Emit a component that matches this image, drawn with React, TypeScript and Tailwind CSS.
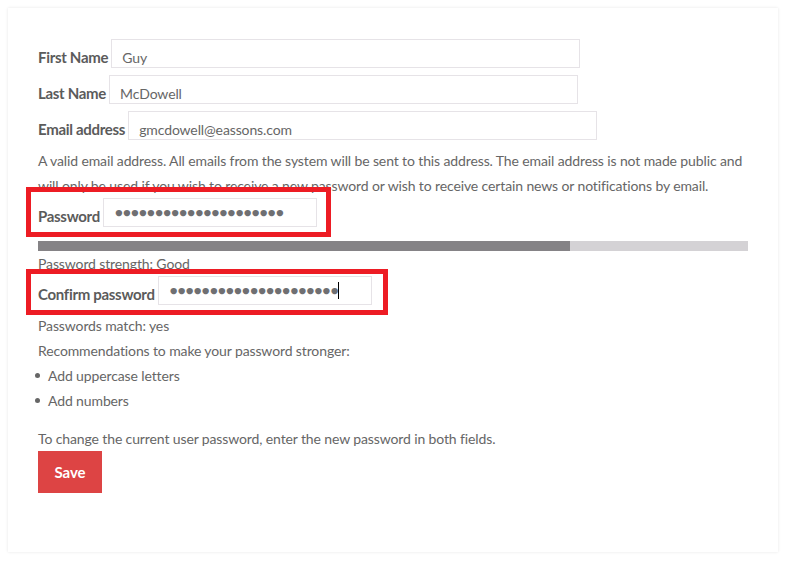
import React from "react"

const font = { fontFamily: "Lato, 'Open Sans', sans-serif" }

function TextRow({ label, value, width }: { label: string; value: string; width: string }) {
  return (
    <div className="flex items-baseline gap-[3px]">
      <label className="text-[15px] leading-[20px] font-bold text-[#5b5b5b] tracking-[-0.3px]">{label}</label>
      <div className={`${width} h-[29px] border border-[#e6e3e7] pt-[8px] pl-[10px] leading-[20px] text-[14px] text-[#666]`}>
        {value}
      </div>
    </div>
  )
}

function Dots({ cursor }: { cursor?: boolean }) {
  return (
    <div className="flex items-center pl-[11px] text-[#6f6f72]">
      <span className="text-[13px] leading-none tracking-[0.25px]">{"●".repeat(21)}</span>
      {cursor && <span className="ml-[-1px] w-px h-[17px] bg-black" />}
    </div>
  )
}

export default function App() {
  return (
    <div className="min-h-[565px] bg-white p-[8px] pr-[7px]" style={font}>
      <div className="w-[770px] h-[544px] bg-white shadow-[0_0_3px_rgba(0,0,0,0.1)] pt-[31px] px-[30px] text-[14px] text-[#666] tracking-[-0.12px]">
        <div className="flex flex-col gap-[7px]">
          <TextRow label="First Name" value="Guy" width="w-[469px]" />
          <TextRow label="Last Name" value="McDowell" width="w-[469px]" />
          <TextRow label="Email address" value="gmcdowell@eassons.com" width="w-[469px]" />
        </div>

        <p className="mt-[8px] leading-[25px]">
          A valid email address. All emails from the system will be sent to this address. The email address is not
          made public and will only be used if you wish to receive a new password or wish to receive certain news or
          notifications by email.
        </p>

        <div className="relative flex items-start gap-[3px]">
          <div className="absolute left-[-12px] top-[-11px] w-[305px] h-[50px] border-[5px] border-[#ed1c24]" />
          <label className="pt-[8px] text-[15px] leading-[20px] font-bold text-[#5b5b5b] tracking-[-0.3px]">Password</label>
          <div className="w-[214px] h-[29px] border border-[#e6e3e7] flex items-center">
            <Dots />
          </div>
        </div>

        <div className="mt-[14px] h-[10px] w-[710px] bg-[#d4d2d5]">
          <div className="h-full w-[532px] bg-[#858386]" />
        </div>
        <div className="leading-[25px]">Password strength: Good</div>

        <div className="relative flex items-start gap-[3px]">
          <div className="absolute left-[-12px] top-[-7px] w-[362px] h-[46px] border-[5px] border-[#ed1c24]" />
          <label className="pt-[8px] text-[15px] leading-[20px] font-bold text-[#5b5b5b] tracking-[-0.3px]">Confirm password</label>
          <div className="w-[214px] h-[29px] border border-[#e6e3e7] flex items-center">
            <Dots cursor />
          </div>
        </div>

        <div className="mt-[8px] leading-[25px]">Passwords match: yes</div>
        <div className="leading-[25px]">Recommendations to make your password stronger:</div>
        <ul className="leading-[25px]">
          <li className="flex items-center">
            <span className="w-[5px] h-[5px] rounded-full bg-[#666] ml-[-3px] mr-[8px]" />
            Add uppercase letters
          </li>
          <li className="flex items-center">
            <span className="w-[5px] h-[5px] rounded-full bg-[#666] ml-[-3px] mr-[8px]" />
            Add numbers
          </li>
        </ul>

        <div className="mt-[13px] leading-[25px]">To change the current user password, enter the new password in both fields.</div>
        <button className="w-[64px] h-[42px] bg-[#dd4444] text-white font-bold text-[15px]">Save</button>
      </div>
    </div>
  )
}
